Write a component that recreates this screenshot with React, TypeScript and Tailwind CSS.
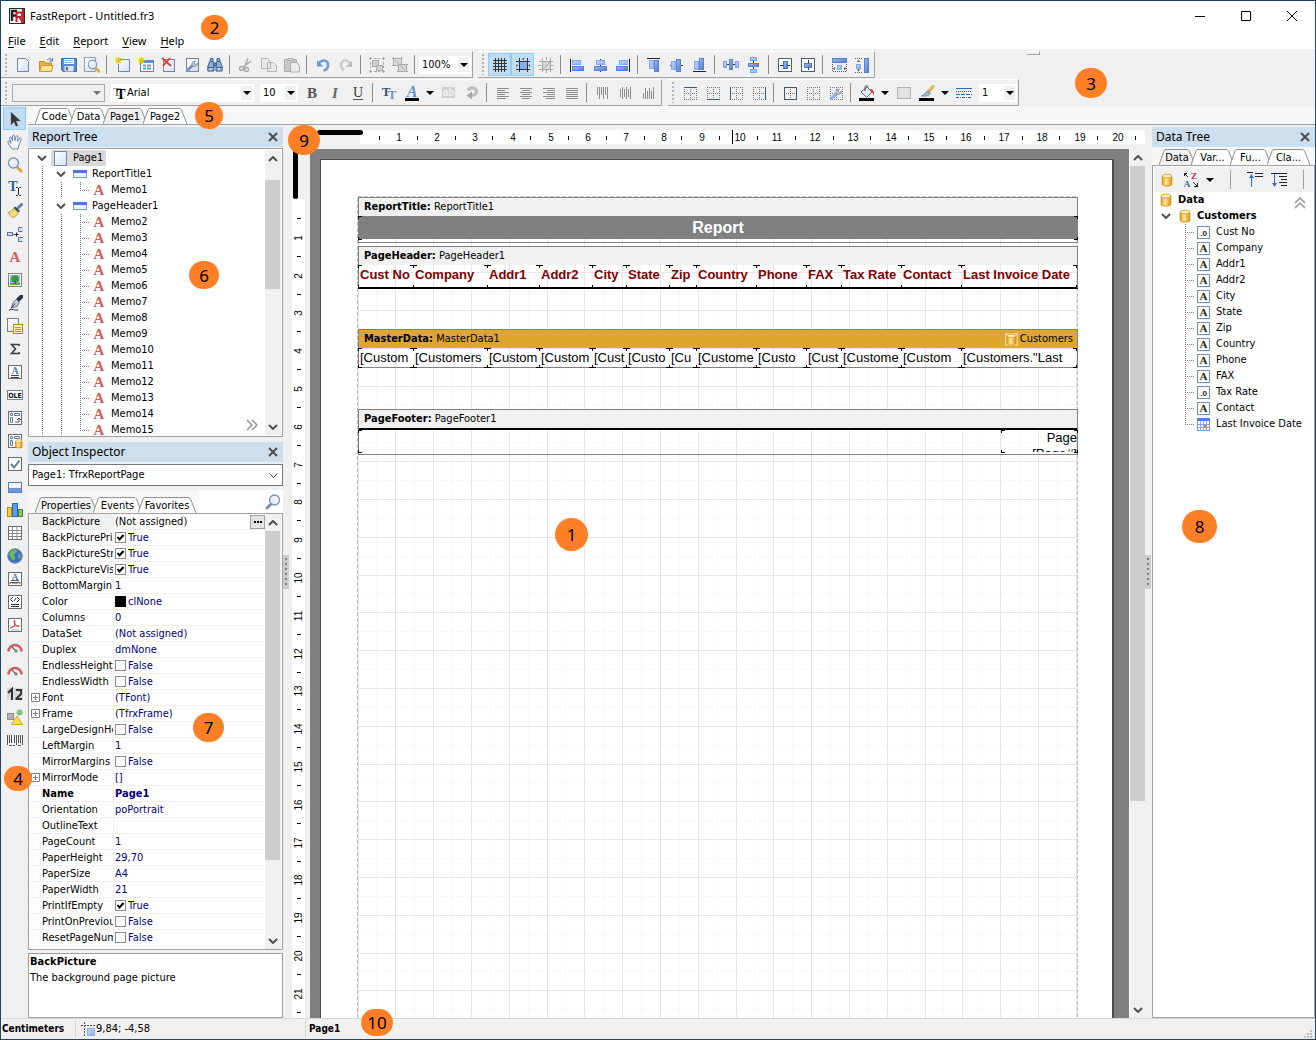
import React, { useState } from "react";

type Kids = { children?: React.ReactNode };

const NAVY = "#3f5878";

function Ico({ children }: Kids) {
  return (
    <svg width="16" height="16" viewBox="0 0 16 16" className="shrink-0" aria-hidden="true">
      {children}
    </svg>
  );
}

function Gradients() {
  return (
    <svg width="0" height="0" className="absolute" aria-hidden="true">
      <defs>
        <linearGradient id="light" x1="0" y1="0" x2="1" y2="1">
          <stop offset="0" stopColor="#bcd5ff" />
          <stop offset="1" stopColor="#8fb2f2" />
        </linearGradient>
        <linearGradient id="blue" x1="0" y1="0" x2="1" y2="1">
          <stop offset="0" stopColor="#a3c0f5" />
          <stop offset="1" stopColor="#4d77cf" />
        </linearGradient>
        <linearGradient id="paper" x1="0" y1="0" x2="1" y2="1">
          <stop offset="0" stopColor="#ffffff" />
          <stop offset="1" stopColor="#d3def2" />
        </linearGradient>
        <linearGradient id="gold" x1="0" y1="0" x2="1" y2="0">
          <stop offset="0" stopColor="#e59a12" />
          <stop offset="0.4" stopColor="#ffe9a0" />
          <stop offset="1" stopColor="#e0920a" />
        </linearGradient>
      </defs>
    </svg>
  );
}

/* ---------- shared icon parts ---------- */

const Sheet = () => <path d="M2.5 1.5h8l3 3v10h-11z" fill="url(#paper)" stroke="#7284a8" />;
const Spark = () => (
  <path d="M3.5 0v7M0 3.5h7M1 1l5 5M6 1l-5 5" stroke="#e2c22c" strokeWidth="1.2" />
);
const Wrench = ({ tone = "#7d92b8" }: { tone?: string }) => (
  <g>
    <path d="M3.5 13.5l5-5" stroke={tone} strokeWidth="3" strokeLinecap="round" />
    <path d="M8 8.5c-.6-2.6 1-4.6 3.4-4.4L9.900 6l1.600 1.600 2-1.500c.3 2.300-1.700 4-4.100 3.400z" fill="#b9c2cf" stroke="#7d8797" strokeWidth=".7" />
  </g>
);
const Lens = ({ flip = false }: { flip?: boolean }) => (
  <g transform={flip ? "translate(16 0) scale(-1 1)" : undefined}>
    <path d="M10 10l4 4" stroke={flip ? "#7f8fa8" : "#d9a544"} strokeWidth="3" strokeLinecap="round" />
    <circle cx="6.500" cy="6" r="5" fill="url(#paper)" stroke="#7a94b8" strokeWidth="1.300" />
  </g>
);
const Cylinder = () => (
  <g>
    <path d="M2.500 3.500v9.500c0 1 2.300 2 5.500 2s5.500-1 5.500-2V3.500z" fill="url(#gold)" stroke="#d08a10" />
    <ellipse cx="8" cy="3.500" rx="5.500" ry="2.200" fill="#fff0bd" stroke="#dd9d22" />
  </g>
);
const Letter = ({ c, fill = "#555", x = 8, y = 13, s = 15, i = false }: { c: string; fill?: string; x?: number; y?: number; s?: number; i?: boolean }) => (
  <text x={x} y={y} textAnchor="middle" fontFamily="Liberation Serif, serif" fontWeight="bold" fontStyle={i ? "italic" : "normal"} fontSize={s} fill={fill}>
    {c}
  </text>
);
const RedA = () => <Letter c="A" fill="#cc6060" y={13} s={15} />;
const Box = ({ children }: Kids) => (
  <g>
    <rect x="1.500" y="1.500" width="13" height="13" fill="#fff" stroke="#6b6b6b" />
    {children}
  </g>
);
const Dots = () => (
  <path d="M2 2.500h13M2 14.500h13M2.500 2v13M14.500 2v13M4 8.500h9M8.500 4v9" stroke="#777" strokeDasharray="1 1" fill="none" />
);
const Lines = ({ d }: { d: string }) => <path d={d} stroke="#8c8c8c" strokeWidth="1" />;

/* ---------- icons by name ---------- */

const icons: Record<string, React.ReactNode> = {
  new: <Sheet />,
  open: (
    <g>
      <path d="M1.500 14V4.500h5l1 1.500h6V14z" fill="#e6b042" stroke="#c28d28" />
      <path d="M1.500 14.500l2-6h11.500l-1.500 6z" fill="#ffe39a" stroke="#cf9a30" />
      <path d="M9 3c2-2 4-1.500 5 .5M14.500 1v3h-3" stroke="#56759d" fill="none" />
    </g>
  ),
  save: (
    <g>
      <path d="M.5 1.500h15v13H2l-1.500-1.500z" fill="#5c8bd4" stroke="#44699f" />
      <rect x="3" y="2" width="10" height="5" fill="#fff" />
      <path d="M4 3.500h8M4 5.500h8" stroke="#9db5da" />
      <rect x="3.500" y="9" width="9" height="5.500" fill="#dfe6f0" />
      <rect x="5" y="10" width="2" height="3.500" fill="#506a90" />
    </g>
  ),
  preview: (
    <g>
      <path d="M.5.500h11v14H.5z" fill="url(#paper)" stroke="#8c9cba" />
      <g transform="translate(3 2.500) scale(.85)">
        <Lens />
      </g>
    </g>
  ),
  newPage: (
    <g>
      <rect x="3.500" y="2.500" width="11" height="12" fill="url(#paper)" stroke="#7284a8" />
      <Spark />
    </g>
  ),
  newDialog: (
    <g>
      <rect x="2.500" y="3.500" width="13" height="11" fill="#fff" stroke="#5f82bb" />
      <path d="M3 5h12" stroke="#5f8fdd" strokeWidth="2" />
      <path d="M5 8.500h3M5 11.500h3M9 8.500h4M9 11.500h4" stroke="#6f95cd" strokeWidth="2" />
      <Spark />
    </g>
  ),
  delete: (
    <g>
      <rect x="2.500" y="2.500" width="11" height="12" fill="url(#paper)" stroke="#7284a8" />
      <path d="M1 1l9 8M9 1L2 9" stroke="#e0402c" strokeWidth="1.800" />
    </g>
  ),
  settings: (
    <g>
      <rect x="2.500" y="1.500" width="12" height="13" fill="url(#paper)" stroke="#7284a8" />
      <Wrench />
    </g>
  ),
  find: (
    <g>
      <path d="M3.500 1.500h2.500v3l1 3V14H.800V9.500l2-5zM12.500 1.500H10v3l-1 3V14h6.200V9.500l-2-5z" fill="#8fb1dc" stroke="#3a5d88" />
      <path d="M6.500 6h3v3h-3zM1 10.500h5.500M9.500 10.500H15M3 4.500h3M10 4.500h3" fill="#5a80b0" stroke="#3a5d88" />
      <path d="M2.500 12h2M11 12h2" stroke="#fff" />
    </g>
  ),
  cut: (
    <g stroke="#a9a9a9" fill="none" strokeWidth="1.500">
      <path d="M10 1L6.500 10M13 4l-8 6" />
      <circle cx="3.500" cy="11.500" r="2" />
      <circle cx="8.500" cy="12.500" r="2" />
    </g>
  ),
  copy: (
    <g fill="#e9e9e9" stroke="#b3b3b3">
      <path d="M.5 1.500h6l3 3v7h-9zM6.500 5.500h6l3 3v6h-9z" />
    </g>
  ),
  paste: (
    <g stroke="#a9a9a9">
      <path d="M.5 2.500h12v12H.5z" fill="#c9c9c9" />
      <path d="M4 1.500h5v2H4z" fill="#e6e6e6" />
      <path d="M6.500 5.500h6l3 3v6.500h-9z" fill="#ececec" />
    </g>
  ),
  undo: (
    <g>
      <path d="M4 6C8 1.500 13 3.500 13 8c0 3-2 5-4.500 5.500" fill="none" stroke="#6c9be0" strokeWidth="2.600" />
      <path d="M2 3v6.500h6.500z" fill="#6c9be0" />
    </g>
  ),
  redo: (
    <g>
      <path d="M12 6C8 1.500 3 3.500 3 8c0 3 1 4 3 5" fill="none" stroke="#c9c9c9" strokeWidth="2.200" />
      <path d="M14 3.500V10H7.500z" fill="#bdbdbd" />
    </g>
  ),
  group: (
    <g stroke="#a9a9a9" fill="#d2d2d2">
      <rect x="3.500" y="3.500" width="6" height="6" />
      <rect x="7.500" y="8.500" width="6" height="5" />
      <path d="M0 1.500h3M1.500 0v3M13 1.500h3M14.500 0v3M0 14.500h3M1.500 13v3M13 14.500h3M14.500 13v3M5 1.500h6M1.500 5v6M14.500 5v6M5 14.500h6" fill="none" strokeDasharray="3 1" />
    </g>
  ),
  ungroup: (
    <g stroke="#a9a9a9" fill="#d9d9d9">
      <rect x="1.500" y="1.500" width="8" height="7" />
      <rect x="6.500" y="7.500" width="8" height="7" />
      <path d="M0 1.500h3M1.500 0v3M8 1.500h3M9.500 0v3M0 8.500h3M5 14.500h3M13 14.500h3M13 7.500h3M3 3l10 10" fill="none" />
    </g>
  ),
  grid: <path d="M3.500 1v14M6.500 1v14M9.500 1v14M12.500 1v14M1 3.500h14M1 6.500h14M1 9.500h14M1 12.500h14" stroke="#333" />,
  snap: (
    <g>
      <rect x="5" y="5" width="7" height="7" fill="#86adf0" />
      <path d="M4.500 1v14M12.500 1v14M1 4.500h14M1 12.500h14" stroke="#333" />
      <path d="M7 1.500h3L8.500 3zM1.500 7v3L3 8.500zM15 7v3l-1.500-1.500z" fill="#333" />
    </g>
  ),
  snapOff: (
    <g stroke="#a8a8a8">
      <rect x="5" y="5" width="7" height="7" fill="#d4d4d4" stroke="none" />
      <path d="M4.500 1v14M12.500 1v14M1 4.500h14M1 12.500h14M5 12l7-7M8.500 0v3M8.500 13v3M0 8.500h3M13 8.500h3" />
    </g>
  ),
  alLeft: (
    <g>
      <path d="M1.500 2v13" stroke="#222" />
      <rect x="3.500" y="3.500" width="8" height="4" fill="url(#light)" stroke="#85a9ea" />
      <rect x="3.500" y="9.500" width="11" height="4" fill="url(#blue)" stroke="#5b80cc" />
    </g>
  ),
  alCenter: (
    <g>
      <path d="M8.500 2v13" stroke="#333" />
      <rect x="4.500" y="3.500" width="8" height="4" fill="url(#light)" stroke="#85a9ea" />
      <rect x="2.500" y="9.500" width="12" height="4" fill="url(#blue)" stroke="#5b80cc" />
    </g>
  ),
  alRight: (
    <g>
      <path d="M14.500 2v13" stroke="#222" />
      <rect x="4.500" y="3.500" width="8" height="4" fill="url(#light)" stroke="#85a9ea" />
      <rect x="1.500" y="9.500" width="11" height="4" fill="url(#blue)" stroke="#5b80cc" />
    </g>
  ),
  alTop: (
    <g>
      <path d="M1 1.500h13" stroke="#222" />
      <rect x="3.500" y="3.500" width="4" height="8" fill="url(#light)" stroke="#85a9ea" />
      <rect x="8.500" y="3.500" width="4" height="11" fill="url(#blue)" stroke="#5b80cc" />
    </g>
  ),
  alMiddle: (
    <g>
      <path d="M1 8.500h13" stroke="#333" />
      <rect x="2.500" y="4.500" width="4" height="8" fill="url(#light)" stroke="#85a9ea" />
      <rect x="7.500" y="2.500" width="4" height="12" fill="url(#blue)" stroke="#5b80cc" />
    </g>
  ),
  alBottom: (
    <g>
      <path d="M1 14.500h13" stroke="#222" />
      <rect x="2.500" y="4.500" width="4" height="8" fill="url(#light)" stroke="#85a9ea" />
      <rect x="7.500" y="1.500" width="4" height="11" fill="url(#blue)" stroke="#5b80cc" />
    </g>
  ),
  spaceH: (
    <g>
      <path d="M0 7.500h16" stroke="#333" />
      <rect x=".5" y="4.500" width="3" height="6" fill="url(#light)" stroke="#7ea2e4" />
      <rect x="6.500" y="2.500" width="3" height="10" fill="url(#blue)" stroke="#5b80cc" />
      <rect x="12.500" y="4.500" width="3" height="6" fill="url(#light)" stroke="#7ea2e4" />
    </g>
  ),
  spaceV: (
    <g>
      <path d="M7.500 0v16" stroke="#333" />
      <rect x="4.500" y=".5" width="6" height="3" fill="url(#light)" stroke="#7ea2e4" />
      <rect x="2.500" y="6.500" width="10" height="3" fill="url(#blue)" stroke="#5b80cc" />
      <rect x="4.500" y="12.500" width="6" height="3" fill="url(#light)" stroke="#7ea2e4" />
    </g>
  ),
  centerH: (
    <g>
      <rect x="1.500" y="1.500" width="13" height="13" fill="#fff" stroke="#4a6178" />
      <path d="M3 8.500h10" stroke="#333" />
      <rect x="6.500" y="4.500" width="4" height="7" fill="url(#blue)" stroke="#4c74c8" />
    </g>
  ),
  centerV: (
    <g>
      <rect x="1.500" y="1.500" width="13" height="13" fill="#fff" stroke="#4a6178" />
      <path d="M8.500 3v10" stroke="#333" />
      <rect x="4.500" y="6.500" width="7" height="4" fill="url(#blue)" stroke="#4c74c8" />
    </g>
  ),
  sameW: (
    <g>
      <rect x="1.500" y="1.500" width="14" height="4" fill="url(#blue)" stroke="#5b80cc" />
      <rect x="6.500" y="8.500" width="4" height="4" fill="url(#light)" stroke="#85a9ea" />
      <path d="M1.500 7v8M15.500 7v8M2 14.500h13" stroke="#555" strokeDasharray="1 1" />
      <path d="M4 10l-2 1.500L4 13zM13 10l2 1.500-2 1.500z" fill="#444" />
    </g>
  ),
  sameH: (
    <g>
      <rect x="10.500" y="1.500" width="4" height="14" fill="url(#blue)" stroke="#5b80cc" />
      <rect x="2.500" y="7.500" width="4" height="4" fill="url(#light)" stroke="#85a9ea" />
      <path d="M1 1.500h8M1 15.500h8" stroke="#555" strokeDasharray="1 1" />
      <path d="M3 5l1.500-2L6 5zM3 12.500l1.500 2 1.500-2z" fill="#444" />
    </g>
  ),
  bold: <Letter c="B" />,
  italic: (
    <text x="8" y="13" textAnchor="middle" fontFamily="Liberation Serif, serif" fontStyle="italic" fontWeight="bold" fontSize="15" fill="#666">I</text>
  ),
  underline: (
    <g>
      <text x="8" y="12" textAnchor="middle" fontFamily="Liberation Serif, serif" fontSize="14" fill="#333">U</text>
      <path d="M3 14.500h10" stroke="#555" />
    </g>
  ),
  font: (
    <g>
      <Letter c="T" x={5} y={11} s={13} fill="#31567f" />
      <Letter c="T" x={11} y={14} s={13} fill="#7596c2" />
    </g>
  ),
  fontColor: (
    <g>
      <Letter c="A" i y={12} s={16} fill="#5d8fd6" />
      <path d="M1 14.500h14" stroke="#000" strokeWidth="3" />
    </g>
  ),
  highlight: (
    <g>
      <rect x="1" y="2" width="13" height="11" fill="#cfcfcf" />
      <text x="7.500" y="11" fontSize="10" fontWeight="bold" textAnchor="middle" fill="#f4f4f4" fontFamily="Liberation Sans, sans-serif">ab</text>
    </g>
  ),
  rotate: (
    <g>
      <path d="M4 5.500C6 1.500 13 2 12.500 7 12 10 10 10.500 7 10.500" fill="none" stroke="#bcbcbc" strokeWidth="3" />
      <path d="M8 6.500V14.500L2.500 10.500z" fill="#a9a9a9" />
    </g>
  ),
  tLeft: <Lines d="M2 3.500h12M2 5.500h8M2 7.500h12M2 9.500h8M2 11.500h12M2 13.500h9" />,
  tCenter: <Lines d="M2 3.500h12M4 5.500h8M2 7.500h12M4 9.500h8M2 11.500h12M4 13.500h8" />,
  tRight: <Lines d="M2 3.500h12M6 5.500h8M2 7.500h12M6 9.500h8M2 11.500h12M5 13.500h9" />,
  tJustify: <Lines d="M2 3.500h12M2 5.500h12M2 7.500h12M2 9.500h12M2 11.500h12M2 13.500h12" />,
  vTop: <Lines d="M2.500 2v8M4.500 2v12M6.500 2v8M8.500 2v12M10.500 2v8M12.500 2v12" />,
  vMiddle: <Lines d="M2.500 4v8M4.500 2v12M6.500 4v8M8.500 2v12M10.500 4v8M12.500 2v12" />,
  vBottom: <Lines d="M2.500 8v6M4.500 3v11M6.500 6v8M8.500 3v11M10.500 6v8M12.500 2v12" />,
  frTop: <g><Dots /><path d="M2 2.500h13" stroke={NAVY} /></g>,
  frBottom: <g><Dots /><path d="M2 14.500h13" stroke={NAVY} /></g>,
  frLeft: <g><Dots /><path d="M2.500 2v13" stroke={NAVY} /></g>,
  frRight: <g><Dots /><path d="M14.500 2v13" stroke={NAVY} /></g>,
  frAll: <g><Dots /><rect x="2.500" y="2.500" width="12" height="12" fill="none" stroke={NAVY} /></g>,
  frNone: <Dots />,
  frEdit: <g><Dots /><Wrench tone="#8fb0e6" /></g>,
  fill: (
    <g>
      <path d="M2 7l6-5 5 5-5.500 5.500z" fill="#e3ecf5" stroke="#5b7186" />
      <path d="M6 6V2.500C6 0 9 0 9 2.500" fill="none" stroke="#444" />
      <path d="M11 4c3 0 4.500 2 4 7-1-2-1-3.500-3-4z" fill="#cf4030" />
      <path d="M0 14.500h15" stroke="#000" strokeWidth="3" />
    </g>
  ),
  shape: <rect x="1.500" y="2.500" width="13" height="11" fill="#e1e1e1" stroke="#b5b5b5" />,
  pen: (
    <g>
      <path d="M14 1.500L9.500 7" stroke="#e3b055" strokeWidth="3" strokeLinecap="round" />
      <path d="M8.500 6l3 2.500c-1.500 2.500-5 3-9.500 2.500 3-.5 4-3.500 6.500-5z" fill="#a3b4cc" stroke="#6c7f9c" strokeWidth=".7" />
      <path d="M0 14.500h15" stroke="#000" strokeWidth="3" />
    </g>
  ),
  lineStyle: (
    <g stroke="#3d65a8">
      <path d="M0 3.500h16" />
      <path d="M0 6.500h16" strokeDasharray="1 1" />
      <path d="M0 9.500h16" strokeDasharray="4 1" />
      <path d="M0 12.500h16" strokeDasharray="3 1 1 1" />
    </g>
  ),
  arrow: <path d="M4 1v13l3-3 2 4.500 2-1L9 10h4.500z" fill="#333" stroke="#777" strokeWidth=".5" />,
  hand: (
    <path d="M5 15L1 9c-1-2 1-2.500 2-1l1 1.500L2.500 4c0-1.500 1.700-1.500 2 0l1 3L5.500 2c0-1.500 2-1.500 2 0l.5 4.500 1-4c.5-1.500 2-1 2 .5l-.5 4.500 2-3c1-1 2 0 1.500 1.500L12 11l-1 4z" fill="#f4f8ff" stroke="#5e7ca8" strokeWidth=".9" />
  ),
  zoom: <Lens />,
  textEdit: (
    <g>
      <Letter c="T" x={6} y={11} s={14} fill="#2d6096" />
      <path d="M9 7.500h1.500l1 1 1-1H14M11.500 8v7M9 15.500h1.500l1-1 1 1H14" stroke="#222" fill="none" />
    </g>
  ),
  brush: (
    <g>
      <path d="M14.500 1.500L11 5" stroke="#6a7fb5" strokeWidth="3" strokeLinecap="round" />
      <path d="M8 3.500l5 4.500-2 1.500L6.500 5z" fill="#3b4250" />
      <path d="M6.500 5l4.500 4.500C10 13 7 14.500 5 14.500L1 9.500c2 0 4-1.500 5.500-4.500z" fill="#f0dc7e" stroke="#a88d2e" strokeWidth=".8" />
    </g>
  ),
  connect: (
    <g fill="#cfdcf2" stroke="#5e7695">
      <rect x=".5" y="6.500" width="5" height="3" />
      <path d="M6 8.500h3" />
      <path d="M15.500 1.500h-4v4h4M15.500 11.500h-4v4h4" />
      <path d="M9.500 6.500v4M7.500 8.500h4" stroke="#222" />
    </g>
  ),
  redA: <RedA />,
  picture: (
    <g>
      <rect x="1.500" y="1.500" width="13" height="13" fill="#fff" stroke="#808080" />
      <rect x="3" y="3" width="10" height="10" fill="#93b8e8" />
      <circle cx="8" cy="7" r="3.800" fill="#3c9a32" />
      <path d="M3 11h10v2H3z" fill="#55ad3e" />
      <path d="M7.500 9h1.500v3H7.500z" fill="#7c5522" />
    </g>
  ),
  ink: (
    <g>
      <path d="M14.500 1.500L11 5" stroke="#28344a" strokeWidth="4" strokeLinecap="round" />
      <path d="M9.500 4.500l3 3-2.500 4-5.500 1.500L6 7.500z" fill="#c3cbd8" stroke="#4c5565" strokeWidth=".8" />
      <path d="M4 13.500l4-5M2 15c4-1.500 5 .5 9 0" stroke="#2a3548" fill="none" />
    </g>
  ),
  subreport: (
    <g>
      <rect x=".5" y=".5" width="11" height="13" fill="url(#paper)" stroke="#808080" />
      <rect x="6.500" y="6.500" width="9" height="9" fill="#ffef96" stroke="#ad8b2c" />
      <path d="M8 9.500h6M8 11.500h6M8 13.500h6" stroke="#bb9a34" />
    </g>
  ),
  sigma: <path d="M12 5V3.500H4.500L8.500 8l-4 4.500H12V11" fill="none" stroke="#3c3c3c" strokeWidth="1.600" />,
  rich: <Box><Letter c="A" y={10} s={10} fill="#4878bb" /><path d="M4 11.500h8M4 13.500h8" stroke="#444" /></Box>,
  ole: (
    <g>
      <rect x=".5" y="3.500" width="15" height="9" fill="#fff" stroke="#6989ac" />
      <text x="8" y="11" fontSize="7" fontWeight="bold" textAnchor="middle" fill="#111" fontFamily="DejaVu Sans Condensed, sans-serif">OLE</text>
    </g>
  ),
  cross: <Box><path d="M3.500 3.500h2v2h-2zM7.500 3.500h5v2h-5zM3.500 7.500h2v5h-2z" fill="none" stroke="#5e7fae" /><path d="M8 12h4V8M10 10l2-2 2 2" fill="none" stroke="#3d5e8f" /></Box>,
  dbCross: <Box><path d="M3.500 3.500h2v2h-2zM7.500 3.500h5v2h-5zM3.500 7.500h2v5h-2z" fill="none" stroke="#5e7fae" /><g transform="translate(7 6) scale(.6)"><Cylinder /></g></Box>,
  check: <Box><path d="M4 8l3 3.500 5.500-7" fill="none" stroke="#5d7dad" strokeWidth="2" /></Box>,
  panel: (
    <g>
      <rect x="1.500" y="3.500" width="13" height="10" fill="#6f96d8" stroke="#5c7db4" />
      <rect x="2" y="4" width="12" height="5" fill="#eff5ff" />
    </g>
  ),
  chart: (
    <g>
      <rect x=".5" y="5.500" width="4" height="9" fill="#f3cd38" stroke="#b28d1c" />
      <rect x="5.500" y="1.500" width="5" height="13" fill="#5d9de6" stroke="#2b64aa" />
      <rect x="11.500" y="7.500" width="4" height="7" fill="#84c766" stroke="#42862e" />
    </g>
  ),
  table: <Box><path d="M2 5.500h12M2 8.500h12M2 11.500h12M5.500 2v12M10 2v12" stroke="#8b8b8b" /></Box>,
  map: (
    <g>
      <circle cx="8" cy="8" r="7.300" fill="#3d6fc8" stroke="#7d8ca0" />
      <path d="M3 4c3-3 6-3 7-1 0 2-3 2-3 4s2 2 1 4-3 2-4-1-3-2-1-6zM12 5c2 2 2 4 1 6l-2-2z" fill="#6bb85a" />
    </g>
  ),
  zip: <Box><Letter c="A" y={9} s={9} fill="#4878bb" /><path d="M4 9.500h8M3 13v-1.500h10V13M6 11v2M8 11v2M10 11v2" fill="none" stroke="#555" /></Box>,
  codeBox: <Box><path d="M6 3L3.500 5.500 6 8M10 3l2.500 2.500L10 8M9 4L7 7M4 10.500h8M4 12.500h8" fill="none" stroke="#333" /></Box>,
  pdf: <Box><path d="M3 11c4-1 6-3 4.500-8-1.500 4 2 7 5 6-3-1-6 0-9 2" fill="none" stroke="#d23c3c" /><path d="M4 13h8" stroke="#aaa" /></Box>,
  gauge: (
    <g>
      <path d="M1.500 11.500A6.500 6.500 0 0 1 14.500 11.500" fill="none" stroke="#c4675f" strokeWidth="2.600" />
      <path d="M5 7l4 4" stroke="#666" strokeWidth="1.300" />
      <circle cx="9" cy="11" r="1.800" fill="#888" />
    </g>
  ),
  digits: (
    <g>
      <rect x="0" y="2" width="16" height="12" fill="#d8d8d8" />
      <path d="M1 7l4-4v11M9 4h5v4l-4.500 4.500V13H15" fill="none" stroke="#333" strokeWidth="2" />
    </g>
  ),
  shapes: (
    <g>
      <rect x=".5" y="4.500" width="6" height="6" fill="#b1b1b1" stroke="#8e8e8e" />
      <circle cx="12.500" cy="3.500" r="3" fill="#7bc57b" />
      <path d="M10 7l5.500 8.500h-11z" fill="#ffd76a" stroke="#d3a63a" />
    </g>
  ),
  barcode: <path d="M.5 3v10M2.500 3v8M4.500 3v8M7.500 3v8M9.500 3v10M11.500 3v8M15.500 3v10M13.500 3v8M2 13.500h3M6 13.500h2M11 13.500h3" stroke="#555" />,
};

/* ---------- small controls ---------- */

const TriDown = () => (
  <svg width="8" height="4" viewBox="0 0 8 4" aria-hidden="true">
    <path d="M0 0h8L4 4z" fill="#000" />
  </svg>
);

function Chevron({ up = false }: { up?: boolean }) {
  return (
    <svg width="10" height="6" viewBox="0 0 10 6" aria-hidden="true">
      <path d={up ? "M1 5l4-4 4 4" : "M1 1l4 4 4-4"} fill="none" stroke="#505050" strokeWidth="2" />
    </svg>
  );
}

function Tool({ name, on = false }: { name: string; on?: boolean }) {
  return (
    <button
      type="button"
      aria-label={name}
      aria-pressed={on}
      className={`flex h-[23px] w-[23px] shrink-0 items-center justify-center border ${on ? "border-[#90c8f6] bg-[#bfdcf3]" : "border-transparent"}`}
    >
      <Ico>{icons[name]}</Ico>
    </button>
  );
}

const Tools = ({ names }: { names: string[] }) => (
  <>
    {names.map((n) => (
      <Tool key={n} name={n} />
    ))}
  </>
);

const Sep = () => <div className="ml-[3px] mr-1 h-[19px] w-px shrink-0 bg-[#8c8c8c]" />;
const Grip = () => <div className="mx-1 h-[21px] w-0.5 shrink-0 bg-[repeating-linear-gradient(#b5b5b5_0_2px,transparent_2px_4px)]" />;
const DropArrow = ({ label }: { label: string }) => (
  <button type="button" aria-label={label} className="flex h-[23px] w-[14px] items-center justify-center">
    <TriDown />
  </button>
);

function Bar({ children }: Kids) {
  return (
    <div className="flex h-[27px] shrink-0 items-center border-b border-r border-t border-b-[#a0a0a0] border-r-[#a0a0a0] border-t-white pr-px">
      <Grip />
      {children}
    </div>
  );
}

function Combo({ label, value, width, empty = false, icon }: { label: string; value: string; width: string; empty?: boolean; icon?: React.ReactNode }) {
  return (
    <div className={`relative flex h-[18px] shrink-0 items-center ${width} ${empty ? "border border-[#a8a8a8]" : "bg-white"}`}>
      {icon}
      <select aria-label={label} className={`h-full w-full min-w-0 appearance-none bg-transparent text-[11px] leading-4 outline-none ${icon ? "" : "pl-[3px]"}`}>
        <option>{value}</option>
      </select>
      <span className={`pointer-events-none absolute right-0.5 flex h-[14px] w-[11px] items-center justify-center ${empty ? "opacity-50" : "bg-[#f0f0f0]"}`}>
        <TriDown />
      </span>
    </div>
  );
}

/* ---------- tabs ---------- */

function Tab({ label, width, on }: { label: string; width: number; on: boolean }) {
  return (
    <button type="button" role="tab" aria-selected={on} className="relative -mr-1 flex h-4 shrink-0 items-end justify-center" style={{ width }}>
      <svg width={width} height="16" className="absolute inset-0" aria-hidden="true">
        <path d={`M0 16L5 2l1-1.500H${width - 7}l1.500 1.500L${width} 16`} fill={on ? "#f0f0f0" : "#fff"} stroke="#909090" />
      </svg>
      <span className="relative text-[11px] leading-[14px]">{label}</span>
    </button>
  );
}

const dither = "bg-[conic-gradient(#fff_25%,#f0f0f0_0_50%,#fff_0_75%,#f0f0f0_0)] bg-[length:2px_2px]";

function PanelTitle({ children }: Kids) {
  return (
    <div className="flex h-5 shrink-0 items-center justify-between bg-[#cddeed] pl-1 pr-[5px]">
      <h2 className="font-['Noto_Sans',sans-serif] text-xs leading-5">{children}</h2>
      <button type="button" aria-label="Close panel" className="flex h-4 w-[10px] items-center justify-center">
        <svg width="10" height="10" viewBox="0 0 10 10" aria-hidden="true">
          <path d="M1 1l8 8M9 1L1 9" stroke="#4d4d4d" strokeWidth="2" />
        </svg>
      </button>
    </div>
  );
}

/* ---------- trees ---------- */

type Joint = "open" | "line" | "tee" | "end" | "none";

function Segment({ joint }: { joint: Joint }) {
  return (
    <span className="flex h-4 w-[19px] shrink-0 items-center justify-center">
      {joint === "open" ? (
        <Chevron />
      ) : (
        <svg width="19" height="16" aria-hidden="true">
          <path
            d={joint === "line" ? "M10.500 0v16" : joint === "tee" ? "M10.500 0v16M12 8.500h8" : joint === "end" ? "M10.500 0v9M12 8.500h8" : ""}
            stroke="#808080"
            strokeDasharray="1 1"
          />
        </svg>
      )}
    </span>
  );
}

function TreeRow({ joints, icon, label, bold = false, selected = false }: { joints: Joint[]; icon: React.ReactNode; label: string; bold?: boolean; selected?: boolean }) {
  return (
    <li className="flex h-4 shrink-0 items-center">
      {joints.map((j, k) => (
        <Segment key={k} joint={j} />
      ))}
      <span className={`flex h-4 items-center ${selected ? "bg-[#d9d9d9]" : ""}`}>
        <span className="flex w-[19px] items-center justify-center">{icon}</span>
        <span className={`whitespace-nowrap px-[3px] text-[11px] leading-4 ${bold ? "font-bold" : ""}`}>{label}</span>
      </span>
    </li>
  );
}

const BandIcon = () => (
  <svg width="14" height="8" viewBox="0 0 14 8" aria-hidden="true">
    <rect x=".5" y=".5" width="13" height="7" fill="#e9f1fd" stroke="#84a0cc" />
    <rect x="0" y="0" width="14" height="3" fill="#4f79c4" />
  </svg>
);
const PageIcon = () => (
  <svg width="13" height="15" viewBox="0 0 13 15" aria-hidden="true">
    <rect x=".5" y=".5" width="12" height="14" fill="url(#paper)" stroke="#7284a8" />
  </svg>
);
const FieldIcon = ({ kind }: { kind: string }) => (
  <svg width="13" height="13" viewBox="0 0 13 13" aria-hidden="true">
    {kind === "date" ? (
      <g>
        <rect x=".5" y=".5" width="12" height="12" fill="#fff" stroke="#7b9bd0" />
        <rect x="0" y="0" width="13" height="3" fill="#4c82e0" />
        <path d="M1 6.500h11M1 9.500h11M3.500 3v9M6.500 3v9M9.500 3v9" stroke="#8ba6d4" />
        <rect x="7" y="7" width="3" height="3" fill="#e87c58" />
      </g>
    ) : (
      <g>
        <rect x=".5" y=".5" width="12" height="12" fill="#fff" stroke="#7390b4" />
        <text x="6.500" y={kind === "num" ? 9.5 : 10} textAnchor="middle" fontSize={kind === "num" ? 8 : 11} fontWeight="bold" fontFamily={kind === "num" ? "Liberation Sans, sans-serif" : "Liberation Serif, serif"} fill="#222">
          {kind === "num" ? ".0" : "A"}
        </text>
      </g>
    )}
  </svg>
);

const DoubleChevron = ({ up = false }: { up?: boolean }) => (
  <svg width="12" height="12" viewBox="0 0 12 12" aria-hidden="true">
    <path d={up ? "M1 6l5-5 5 5M1 11l5-5 5 5" : "M1 1l5 5-5 5M6 1l5 5-5 5"} fill="none" stroke="#a8a8a8" strokeWidth="1.800" />
  </svg>
);

function ScrollBar({ thumb }: { thumb: string }) {
  return (
    <div className="flex w-[15px] shrink-0 flex-col bg-[#f0f0f0]">
      <button type="button" aria-label="Scroll up" className="flex h-[17px] shrink-0 items-center justify-center">
        <Chevron up />
      </button>
      <div className="min-h-0 grow">
        <div className={`bg-[#cdcdcd] ${thumb}`} />
      </div>
      <button type="button" aria-label="Scroll down" className="flex h-[17px] shrink-0 items-center justify-center">
        <Chevron />
      </button>
    </div>
  );
}

/* ---------- left side ---------- */

const sideTools = [
  "arrow", "hand", "zoom", "textEdit", "brush", "connect", "redA", "picture", "ink", "subreport", "sigma", "rich", "ole", "cross",
  "dbCross", "check", "panel", "chart", "table", "map", "zip", "codeBox", "pdf", "gauge", "gauge", "digits", "shapes", "barcode",
];

function ReportTree() {
  return (
    <section>
      <PanelTitle>Report Tree</PanelTitle>
      <div className="relative mt-px flex h-[289px] border border-[#a0a0a0] bg-white p-px">
        <ul className="min-w-0 grow overflow-hidden pl-0.5">
          <TreeRow joints={["open"]} icon={<PageIcon />} label="Page1" selected />
          <TreeRow joints={["line", "open"]} icon={<BandIcon />} label="ReportTitle1" />
          <TreeRow joints={["line", "line", "end"]} icon={<Ico>{icons.redA}</Ico>} label="Memo1" />
          <TreeRow joints={["line", "open"]} icon={<BandIcon />} label="PageHeader1" />
          {Array.from({ length: 14 }, (_, k) => (
            <TreeRow key={k} joints={["line", "line", k === 13 ? "end" : "tee"]} icon={<Ico>{icons.redA}</Ico>} label={`Memo${k + 2}`} />
          ))}
        </ul>
        <ScrollBar thumb="mt-[13px] h-[109px]" />
        <div className="w-px shrink-0 bg-[#f0f0f0]" />
        <span className="absolute bottom-[5px] right-6">
          <DoubleChevron />
        </span>
      </div>
    </section>
  );
}

type Prop = { name: string; value: string; kind?: "check" | "color" | "more"; plus?: boolean; bold?: boolean };

const props: Prop[] = [
  { name: "BackPicture", value: "(Not assigned)", kind: "more" },
  { name: "BackPicturePrintable", value: "True", kind: "check" },
  { name: "BackPictureStretched", value: "True", kind: "check" },
  { name: "BackPictureVisible", value: "True", kind: "check" },
  { name: "BottomMargin", value: "1" },
  { name: "Color", value: "clNone", kind: "color" },
  { name: "Columns", value: "0" },
  { name: "DataSet", value: "(Not assigned)" },
  { name: "Duplex", value: "dmNone" },
  { name: "EndlessHeight", value: "False", kind: "check" },
  { name: "EndlessWidth", value: "False", kind: "check" },
  { name: "Font", value: "(TFont)", plus: true },
  { name: "Frame", value: "(TfrxFrame)", plus: true },
  { name: "LargeDesignHeight", value: "False", kind: "check" },
  { name: "LeftMargin", value: "1" },
  { name: "MirrorMargins", value: "False", kind: "check" },
  { name: "MirrorMode", value: "[]", plus: true },
  { name: "Name", value: "Page1", bold: true },
  { name: "Orientation", value: "poPortrait" },
  { name: "OutlineText", value: "" },
  { name: "PageCount", value: "1" },
  { name: "PaperHeight", value: "29,70" },
  { name: "PaperSize", value: "A4" },
  { name: "PaperWidth", value: "21" },
  { name: "PrintIfEmpty", value: "True", kind: "check" },
  { name: "PrintOnPreviousPage", value: "False", kind: "check" },
  { name: "ResetPageNumbers", value: "False", kind: "check" },
];

function PropRow({ p }: { p: Prop }) {
  const [on, setOn] = useState(p.value === "True");
  return (
    <tr className={p.bold ? "font-bold" : ""}>
      <th
        scope="row"
        className={`h-4 border-b border-r border-[#f0f0f0] p-0 text-left ${p.bold ? "font-bold" : "font-normal"} ${p.kind === "more" ? "bg-[#f0f0f0]" : ""}`}
      >
        <div className="flex h-[15px] items-center overflow-hidden">
          <span className="flex w-3 shrink-0 items-center pl-px">
            {p.plus && (
              <svg width="9" height="9" viewBox="0 0 9 9" aria-hidden="true">
                <path d="M.5.500h8v8h-8zM2 4.500h5M4.500 2v5" fill="#fff" stroke="#808080" />
              </svg>
            )}
          </span>
          <span className="min-w-0 overflow-hidden whitespace-nowrap">{p.name}</span>
        </div>
      </th>
      <td className={`h-4 whitespace-nowrap border-b border-[#f0f0f0] p-0 ${p.kind === "more" ? "text-black" : "text-[#000080]"}`}>
        <div className="flex h-[15px] items-center pl-px">
          {p.kind === "check" ? (
            <label className="relative flex items-center gap-0.5">
              <input type="checkbox" checked={on} onChange={() => setOn(!on)} className="size-[11px] appearance-none border border-[#8c8c8c] bg-white" />
              {on && (
                <svg width="11" height="11" viewBox="0 0 11 11" className="pointer-events-none absolute left-0" aria-hidden="true">
                  <path d="M2.500 5l2 2.500L8.500 3" fill="none" stroke="#000" strokeWidth="2" />
                </svg>
              )}
              {on ? "True" : "False"}
            </label>
          ) : (
            <>
              {p.kind === "color" && <span className="mr-0.5 size-[11px] bg-black" />}
              {p.value}
            </>
          )}
          {p.kind === "more" && (
            <button type="button" aria-label="Edit BackPicture" className="ml-auto flex h-[14px] w-[15px] items-center justify-center gap-px border border-[#a0a0a0] bg-[#e3e3e3]">
              <i className="size-0.5 bg-black" />
              <i className="size-0.5 bg-black" />
              <i className="size-0.5 bg-black" />
            </button>
          )}
        </div>
      </td>
    </tr>
  );
}

function Inspector() {
  return (
    <section className="mt-[5px] flex min-h-0 grow flex-col">
      <PanelTitle>Object Inspector</PanelTitle>
      <div className="relative mt-0.5 flex h-[22px] shrink-0 items-center border border-[#7a7a7a] bg-white">
        <select aria-label="Selected object" className="w-full appearance-none bg-transparent pl-[3px] text-[11px] leading-4 outline-none">
          <option>Page1: TfrxReportPage</option>
        </select>
        <svg width="9" height="5" viewBox="0 0 9 5" className="pointer-events-none absolute right-1" aria-hidden="true">
          <path d="M.5.500l4 4 4-4" fill="none" stroke="#444" />
        </svg>
      </div>
      <div className="mt-1 flex h-[23px] shrink-0 justify-between bg-white">
        <div role="tablist" className={`flex w-[171px] items-end pl-[7px] ${dither}`}>
          <Tab label="Properties" width={62} on />
          <Tab label="Events" width={49} on={false} />
          <Tab label="Favorites" width={58} on={false} />
        </div>
        <button type="button" aria-label="Search properties" className="mr-0.5 flex w-4 items-center">
          <Ico>
            <Lens flip />
          </Ico>
        </button>
      </div>
      <div className="flex min-h-0 grow border border-[#a0a0a0] bg-white px-px">
        <div className="min-w-0 grow overflow-hidden">
          <table className="w-full table-fixed border-separate border-spacing-0 text-[11px] leading-[15px]">
            <colgroup>
              <col className="w-[84px]" />
              <col />
            </colgroup>
            <tbody>
              {props.map((p) => (
                <PropRow key={p.name} p={p} />
              ))}
            </tbody>
          </table>
        </div>
        <ScrollBar thumb="h-[329px]" />
        <div className="w-px shrink-0 bg-[#f0f0f0]" />
      </div>
      <div className="mt-[3px] h-[65px] shrink-0 border border-[#a0a0a0] bg-white px-px text-[11px] leading-4">
        <p className="font-bold">BackPicture</p>
        <p>The background page picture</p>
      </div>
    </section>
  );
}

/* ---------- design surface ---------- */

const CM = 37.8;

function TopRuler() {
  return (
    <svg width="786" height="14" className="bg-white" fontFamily="Liberation Sans, sans-serif" fontSize="10" role="img" aria-label="Horizontal ruler">
      {Array.from({ length: 21 }, (_, k) => (
        <g key={k}>
          {k > 0 && (
            <text x={Math.round(1.5 + k * CM)} y="11" textAnchor="middle">
              {k}
            </text>
          )}
          <path d={`M${Math.round(19 + k * CM)}.5 6v4`} stroke="#000" />
        </g>
      ))}
      <path d="M372.500 0v14" stroke="#000" />
    </svg>
  );
}

function SideRuler() {
  return (
    <svg width="13" height="820" className="mt-[50px] shrink-0 bg-white" fontFamily="Liberation Sans, sans-serif" fontSize="10" role="img" aria-label="Vertical ruler">
      {Array.from({ length: 22 }, (_, k) => (
        <g key={k}>
          {k > 0 && (
            <text x={-Math.round(1 + k * CM)} y="10" textAnchor="middle" transform="rotate(-90)">
              {k}
            </text>
          )}
          <path d={`M5 ${Math.round(19 + k * CM)}.5h4`} stroke="#000" />
        </g>
      ))}
    </svg>
  );
}

function PageGrid() {
  const steps = Array.from({ length: 56 }, (_, k) => k);
  return (
    <svg width="721" height="1050" className="absolute left-0 top-0" aria-hidden="true">
      {[1, 0].map((odd) =>
        steps
          .filter((k) => k % 2 === odd)
          .map((k) => {
            const at = Math.floor(1 + (k * CM) / 2) + 0.5;
            return <path key={k} d={`M1 ${at}H720${at < 721 ? `M${at} 1V1050` : ""}`} stroke={odd ? "#f7f7f7" : "#e6e6e6"} />;
          }),
      )}
      <path d="M.5 1050V.5h720V1050" fill="none" stroke="#bdbdbd" strokeDasharray="4 2" />
    </svg>
  );
}

function Corners({ right = "right-0" }: { right?: string }) {
  return (
    <>
      <i className="absolute -left-px top-0 h-[3px] w-1 border-l border-t border-black" />
      <i className={`absolute top-0 h-[3px] w-1 border-r border-t border-black ${right}`} />
      <i className="absolute -bottom-px -left-px h-[3px] w-1 border-b border-l border-black" />
      <i className={`absolute -bottom-px h-[3px] w-1 border-b border-r border-black ${right}`} />
    </>
  );
}

function BandTitle({ kind, name, gold = false }: { kind: string; name: string; gold?: boolean }) {
  return (
    <div
      className={`flex h-[18px] items-center justify-between pl-[5px] pr-1 font-['DejaVu_Sans_Condensed',sans-serif] text-[11px] leading-4 ${gold ? "bg-[#dfa62e]" : "bg-[#f0f0f0]"}`}
    >
      <span>
        <b>{kind}:</b> {name}
      </span>
      {gold && (
        <span className="flex items-center gap-0.5">
          <svg width="13" height="13" viewBox="0 0 16 16" aria-hidden="true">
            <rect width="16" height="16" fill="#fff3c8" opacity=".55" />
            <Cylinder />
          </svg>
          Customers
        </span>
      )}
    </div>
  );
}

const columns = "grid grid-cols-[55px_74px_52px_53px_34px_43px_27px_60px_50px_35px_60px_60px_115px]";
const heads = ["Cust No", "Company", "Addr1", "Addr2", "City", "State", "Zip", "Country", "Phone", "FAX", "Tax Rate", "Contact", "Last Invoice Date"];
const cells = ["[Custom", "[Customers", "[Custom", "[Custom", "[Cust", "[Custo", "[Cu", "[Custome", "[Custo", "[Cust", "[Custome", "[Custom", '[Customers."Last'];

function Memos({ items, className }: { items: string[]; className: string }) {
  return (
    <div className={`${columns} ${className}`}>
      {items.map((t, k) => (
        <div key={k} className="relative min-w-0 whitespace-nowrap pl-px">
          {t}
          <Corners />
        </div>
      ))}
    </div>
  );
}

function ReportPage() {
  return (
    <div className="ml-[10px] mt-[10px] h-[1124px] w-[794px] shrink-0 border border-r-2 border-[#4d4d4d] bg-white pl-9 pt-9">
      <div className="relative w-[721px] pl-px pt-px">
        <PageGrid />
        <div className="relative w-[720px] font-['Liberation_Sans',sans-serif]">
          <div className="mb-[3px] h-[46px] border border-[#808080]">
            <BandTitle kind="ReportTitle" name="ReportTitle1" />
            <div className="relative h-[23px] bg-[#808080] text-center text-base font-bold leading-6 text-white">
              Report
              <Corners right="-right-px" />
            </div>
          </div>
          <div className="mb-10 border border-b-2 border-[#808080] border-b-black">
            <BandTitle kind="PageHeader" name="PageHeader1" />
            <Memos items={heads} className="h-[22px] text-[13px] font-bold leading-5 text-[#800000]" />
          </div>
          <div className="mb-[41px] border border-[#808080]">
            <BandTitle kind="MasterData" name="MasterData1" gold />
            <Memos items={cells} className="h-[19px] text-[13px] leading-[19px]" />
          </div>
          <div className="border border-[#808080]">
            <div className="border-b-2 border-black">
              <BandTitle kind="PageFooter" name="PageFooter1" />
            </div>
            <div className="relative flex h-6 items-start justify-between">
              <div className="relative h-[22px] grow">
                <i className="absolute -left-px top-0 h-[3px] w-1 border-l border-t border-black" />
                <i className="absolute -bottom-px -left-px h-[3px] w-1 border-b border-l border-black" />
              </div>
              <div className="relative h-[22px] w-[75px]">
                <div className="h-[22px] overflow-hidden text-right text-[13px] leading-4">
                  Page
                  <br />
                  [Page#]
                </div>
                <Corners right="-right-px" />
              </div>
            </div>
          </div>
        </div>
      </div>
    </div>
  );
}

const Splitter = ({ width }: { width: string }) => (
  <div className={`flex shrink-0 items-center ${width}`}>
    <div className="flex h-[34px] w-1.5 flex-col items-center justify-evenly bg-[#cdcdcd]">
      {[0, 1, 2, 3, 4, 5].map((k) => (
        <i key={k} className="size-0.5 bg-[#808080]" />
      ))}
    </div>
  </div>
);

/* ---------- data tree ---------- */

const fields: [string, string][] = [
  ["Cust No", "num"], ["Company", "text"], ["Addr1", "text"], ["Addr2", "text"], ["City", "text"], ["State", "text"], ["Zip", "text"],
  ["Country", "text"], ["Phone", "text"], ["FAX", "text"], ["Tax Rate", "num"], ["Contact", "text"], ["Last Invoice Date", "date"],
];

function DataPanel() {
  return (
    <section className="flex w-[163px] shrink-0 flex-col pt-0.5">
      <PanelTitle>Data Tree</PanelTitle>
      <div role="tablist" className={`flex h-[18px] shrink-0 items-end pl-[7px] ${dither}`}>
        <Tab label="Data" width={36} on />
        <Tab label="Var..." width={43} on={false} />
        <Tab label="Fu..." width={41} on={false} />
        <Tab label="Cla..." width={43} on={false} />
      </div>
      <div className="relative flex min-h-0 grow flex-col border border-[#a0a0a0] bg-white">
        <div className="mx-px mt-px flex h-[25px] shrink-0 items-center bg-[#f0f0f0] pl-1">
          <button type="button" aria-label="Data" className="flex w-[18px] justify-center">
            <svg width="14" height="14" viewBox="0 0 16 16" aria-hidden="true">
              <Cylinder />
            </svg>
          </button>
          <button type="button" aria-label="Sort" className="ml-[7px] flex w-4">
            <Ico>
              <Letter c="A" x={4} y={15} s={9} fill="#3b62b0" />
              <Letter c="Z" x={11} y={7} s={9} fill="#b04050" />
              <path d="M1 1l4 4M1.500 1v3M1 1.500h3M10 10l4 4M14.500 11v4M11 14.500h4" stroke="#222" />
            </Ico>
          </button>
          <span className="ml-1">
            <DropArrow label="Sort order" />
          </span>
          <div className="ml-[13px] h-[19px] w-px bg-[#a0a0a0]" />
          <button type="button" aria-label="Collapse all" className="ml-4 flex w-4">
            <Ico>
              <path d="M4.500 15V4" stroke="#3b6cc4" />
              <path d="M2 6l2.500-4L7 6z" fill="#3b6cc4" />
              <path d="M0 .5h6M8 1.500h8M8 4.500h8" stroke="#222" />
            </Ico>
          </button>
          <button type="button" aria-label="Expand all" className="ml-2 flex w-4">
            <Ico>
              <path d="M3.500 2v11" stroke="#3b6cc4" />
              <path d="M1 11l2.500 4L6 11z" fill="#3b6cc4" />
              <path d="M0 1.500h16M8 4.500h8M10 7.500h6M8 10.500h8M10 13.500h6" stroke="#222" />
            </Ico>
          </button>
          <div className="ml-4 h-[19px] w-px bg-[#a0a0a0]" />
        </div>
        <ul className="overflow-hidden pl-[3px]">
          <TreeRow joints={[]} icon={<svg width="14" height="14" viewBox="0 0 16 16" aria-hidden="true"><Cylinder /></svg>} label="Data" bold />
          <TreeRow joints={["open"]} icon={<svg width="14" height="14" viewBox="0 0 16 16" aria-hidden="true"><Cylinder /></svg>} label="Customers" bold />
          {fields.map(([label, kind]) => (
            <TreeRow key={label} joints={["none", kind === "date" ? "end" : "tee"]} icon={<FieldIcon kind={kind} />} label={label} />
          ))}
        </ul>
        <span className="absolute right-2 top-[31px]">
          <DoubleChevron up />
        </span>
      </div>
    </section>
  );
}

/* ---------- numbered callouts ---------- */

const callouts: [string, string][] = [
  ["1", "left-[554px] top-[517px] h-[33px] w-[33px]"],
  ["2", "left-[200px] top-[14px] h-[25px] w-[27px]"],
  ["3", "left-[1074px] top-[67px] h-[30px] w-8"],
  ["4", "left-[3px] top-[765px] h-[25px] w-7"],
  ["5", "left-[194px] top-[101px] h-[27px] w-7"],
  ["6", "left-[188px] top-[260px] h-7 w-[30px]"],
  ["7", "left-[192px] top-[712px] h-[29px] w-[31px]"],
  ["8", "left-[1181px] top-[509px] h-[33px] w-[35px]"],
  ["9", "left-[287px] top-[124px] h-[30px] w-8"],
  ["10", "left-[360px] top-[1008px] h-[27px] w-8"],
];

export default function App() {
  return (
    <div className="relative flex h-screen flex-col overflow-hidden border border-[#1d4668] bg-[#f0f0f0] font-['DejaVu_Sans_Condensed',sans-serif] text-[11px] text-black">
      <Gradients />
      <header className="flex h-[30px] shrink-0 items-center justify-between bg-white pl-2 font-['Noto_Sans',sans-serif]">
        <div className="flex items-center gap-[5px]">
          <svg width="16" height="16" viewBox="0 0 16 16" aria-hidden="true">
            <rect x=".5" y=".5" width="15" height="15" fill="#f5f5f5" stroke="#292929" />
            <path d="M13 1h2v14h-3z" fill="#c32130" />
            <path d="M3 13V3h5M3 7.500h4" fill="none" stroke="#222" strokeWidth="2.400" />
            <path d="M7.500 14V4.500h3.500c3 0 3 4.500 0 4.500H8.500M10.500 9l3 5" fill="none" stroke="#c32130" strokeWidth="2" />
          </svg>
          <h1 className="text-[11px] leading-4">FastReport - Untitled.fr3</h1>
        </div>
        <div className="flex">
          {[
            ["Minimize", "M0 5.500h10"],
            ["Maximize", "M.5.500h9v9h-9z"],
            ["Close", "M0 0l10 10M10 0L0 10"],
          ].map(([label, d]) => (
            <button key={label} type="button" aria-label={label} className="flex h-[30px] w-[46px] items-center justify-center">
              <svg width="10" height="10" viewBox="0 0 10 10" aria-hidden="true">
                <path d={d} fill="none" stroke="#000" />
              </svg>
            </button>
          ))}
        </div>
      </header>
      <nav className="flex h-[18px] shrink-0 items-end gap-[14px] bg-white pl-[7px] font-['Noto_Sans',sans-serif] text-[11px]">
        {["File", "Edit", "Report", "View", "Help"].map((m) => (
          <button key={m} type="button" className="leading-4">
            <span className="underline underline-offset-2">{m[0]}</span>
            {m.slice(1)}
          </button>
        ))}
      </nav>

      <div className="flex shrink-0 flex-col gap-px pt-0.5">
        <div className="flex gap-[5px]">
          <Bar>
            <Tools names={["new", "open", "save", "preview"]} />
            <Sep />
            <Tools names={["newPage", "newDialog", "delete", "settings", "find"]} />
            <Sep />
            <Tools names={["cut", "copy", "paste"]} />
            <Sep />
            <Tools names={["undo", "redo"]} />
            <Sep />
            <Tools names={["group", "ungroup"]} />
            <Sep />
            <Combo label="Zoom" value="100%" width="w-[52px]" />
          </Bar>
          <Bar>
            <Tool name="grid" on />
            <Tool name="snap" on />
            <Tool name="snapOff" />
            <Sep />
            <Tools names={["alLeft", "alCenter", "alRight"]} />
            <Sep />
            <Tools names={["alTop", "alMiddle", "alBottom"]} />
            <Sep />
            <Tools names={["spaceH", "spaceV"]} />
            <Sep />
            <Tools names={["centerH", "centerV"]} />
            <Sep />
            <Tools names={["sameW", "sameH"]} />
          </Bar>
          <div className="ml-[147px] h-1 w-[13px] border-b border-r border-t border-b-[#a0a0a0] border-r-[#a0a0a0] border-t-white" />
        </div>
        <div className="flex gap-1.5">
          <Bar>
            <Combo label="Style" value="" width="ml-px mr-1.5 w-[93px]" empty />
            <Combo
              label="Font name"
              value="Arial"
              width="w-[143px]"
              icon={
                <svg width="14" height="14" viewBox="0 0 14 14" className="ml-0.5 shrink-0" aria-hidden="true">
                  <Letter c="T" x={4} y={10} s={12} fill="#888" />
                  <Letter c="T" x={8} y={13} s={14} fill="#000" />
                </svg>
              }
            />
            <Combo label="Font size" value="10" width="ml-1.5 mr-0.5 w-[38px]" />
            <Tools names={["bold", "italic", "underline"]} />
            <Sep />
            <Tools names={["font", "fontColor"]} />
            <DropArrow label="Font color" />
            <Tools names={["highlight", "rotate"]} />
            <Sep />
            <Tools names={["tLeft", "tCenter", "tRight", "tJustify"]} />
            <Sep />
            <Tools names={["vTop", "vMiddle", "vBottom"]} />
          </Bar>
          <Bar>
            <Tools names={["frTop", "frBottom", "frLeft", "frRight"]} />
            <Sep />
            <Tools names={["frAll", "frNone", "frEdit"]} />
            <Sep />
            <Tools names={["fill"]} />
            <DropArrow label="Fill color" />
            <Tools names={["shape", "pen"]} />
            <DropArrow label="Line color" />
            <Tools names={["lineStyle"]} />
            <Combo label="Line width" value="1" width="ml-1 w-[38px]" />
          </Bar>
        </div>
      </div>

      <div className="flex min-h-0 grow">
        <aside className="flex w-[27px] shrink-0 flex-col items-center pt-px">
          {sideTools.map((n, k) => (
            <Tool key={k} name={n} on={k === 0} />
          ))}
        </aside>
        <div className="flex min-w-0 grow flex-col">
          <div role="tablist" className={`flex h-[19px] shrink-0 items-end border-b border-[#a0a0a0] pl-[7px] ${dither}`}>
            <Tab label="Code" width={39} on={false} />
            <Tab label="Data" width={37} on={false} />
            <Tab label="Page1" width={44} on />
            <Tab label="Page2" width={44} on={false} />
          </div>
          <div className="flex min-h-0 grow">
            <div className="flex w-[255px] shrink-0 flex-col pt-0.5">
              <ReportTree />
              <Inspector />
            </div>
            <Splitter width="w-[9px]" />
            <main className="flex min-w-0 grow flex-col">
              <div className="flex h-6 shrink-0 overflow-hidden pl-[68px] pt-[5px]">
                <TopRuler />
              </div>
              <div className="flex min-h-0 grow">
                <div className="flex w-[18px] shrink-0 overflow-hidden">
                  <SideRuler />
                </div>
                <div className="flex min-w-0 grow overflow-hidden bg-[#808080]">
                  <ReportPage />
                </div>
                <div className="flex border-l border-white">
                  <ScrollBar thumb="h-[635px]" />
                </div>
              </div>
            </main>
            <Splitter width="w-[7px]" />
            <DataPanel />
          </div>
        </div>
      </div>

      <footer className="flex h-[21px] shrink-0 items-center border-t border-[#d7d7d7] text-[11px] leading-4">
        <span className="w-[74px] pl-px text-[10px] font-bold">Centimeters</span>
        <span className="flex h-[18px] w-[230px] items-center border-l border-[#d7d7d7] pl-[5px]">
          <svg width="15" height="14" viewBox="0 0 15 14" aria-hidden="true">
            <path d="M3.500 0v14M0 3.500h14" stroke="#555" strokeDasharray="2 1" />
            <rect x="6.500" y="6.500" width="7" height="7" fill="url(#light)" stroke="#8fb0ea" />
          </svg>
          9,84; -4,58
        </span>
        <span className="flex h-[18px] grow items-center border-l border-[#d7d7d7] pl-[3px] text-[10px] font-bold">Page1</span>
        <svg width="9" height="9" viewBox="0 0 9 9" className="mr-0.5 self-end" aria-hidden="true">
          <path d="M6 0h2v2H6zM3 3h2v2H3zM6 3h2v2H6zM0 6h2v2H0zM3 6h2v2H3zM6 6h2v2H6z" fill="#bdbdbd" />
        </svg>
      </footer>

      <i className="absolute left-[316px] top-[129px] h-[5px] w-[46px] rounded-sm bg-black" />
      <i className="absolute left-[292px] top-[149px] h-[49px] w-[5px] rounded-sm bg-black" />
      {callouts.map(([n, place]) => (
        <span key={n} className={`absolute flex items-center justify-center rounded-full bg-[#ff7f27] font-['Noto_Sans',sans-serif] text-[17px] leading-none ${place}`}>
          {n}
        </span>
      ))}
    </div>
  );
}
